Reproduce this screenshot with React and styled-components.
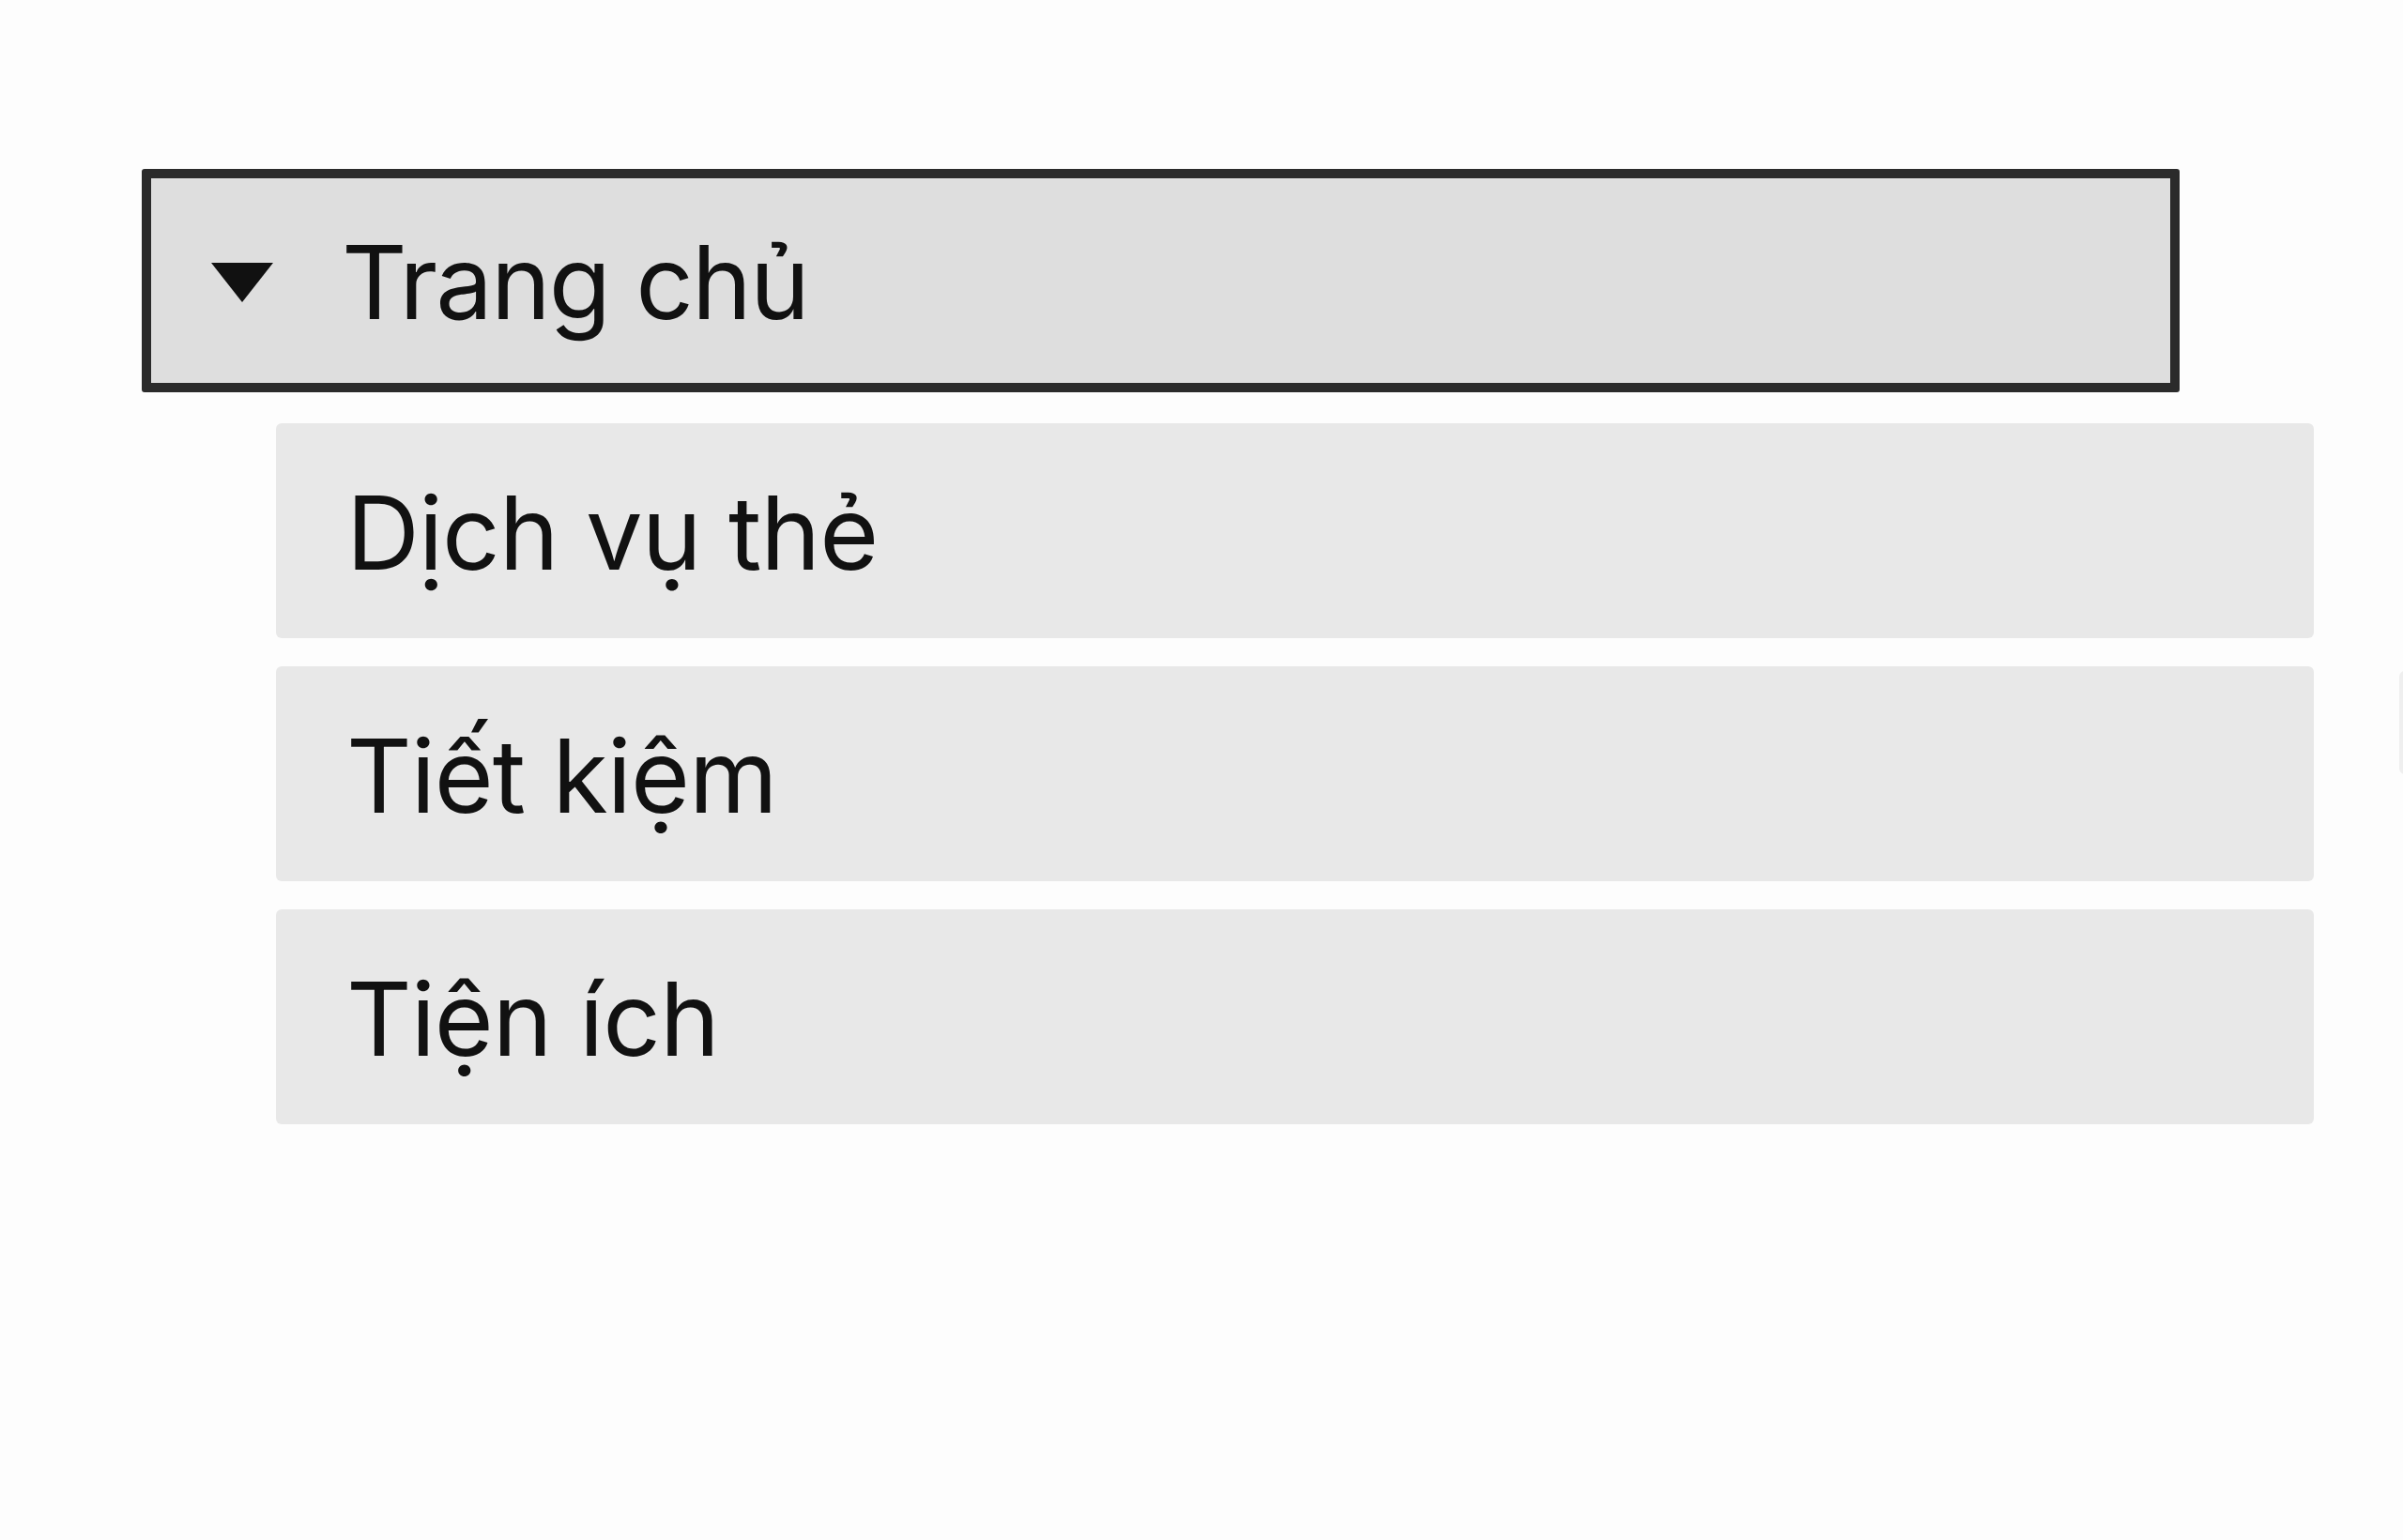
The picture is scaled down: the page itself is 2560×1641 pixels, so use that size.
import React from "react";
import styled, { createGlobalStyle } from "styled-components";

const Global = createGlobalStyle`
  html, body {
    margin: 0;
    padding: 0;
    background: #fdfdfd;
  }
  body {
    font-family: Inter, Lato, "Noto Sans", sans-serif;
    color: #151515;
  }
`;

const Page = styled.div`
  position: relative;
  min-height: 1641px;
  padding: 180px 0 0 151px;
  box-sizing: border-box;
  overflow: hidden;
`;

const Tree = styled.nav`
  display: flex;
  flex-direction: column;
  width: 2314px;
`;

const Header = styled.div`
  box-sizing: border-box;
  width: 2171px;
  height: 238px;
  border: 10px solid #2b2b2b;
  border-radius: 3px;
  background: #dedede;
  display: flex;
  align-items: center;
  padding-left: 64px;
  gap: 73px;
`;

const Caret = styled.svg`
  width: 66px;
  height: 42px;
  flex: none;
  margin-top: 4px;
`;

const Label = styled.span`
  font-size: 108px;
  line-height: 1;
  font-weight: 400;
  color: #111;
  letter-spacing: ${(p) => (p.$tight ? "-2px" : "-1px")};
  margin-top: 4px;
`;

const Children = styled.ul`
  list-style: none;
  margin: 33px 0 0 143px;
  padding: 0;
  display: flex;
  flex-direction: column;
  gap: 30px;
`;

const Item = styled.li`
  box-sizing: border-box;
  width: 2171px;
  height: 229px;
  background: #e8e8e8;
  border-radius: 6px;
  display: flex;
  align-items: center;
  padding-left: 75px;
`;

const EdgeTab = styled.div`
  position: absolute;
  left: 2556px;
  top: 715px;
  width: 20px;
  height: 110px;
  border-radius: 6px;
  background: #efefef;
`;

export default function App() {
  const items = ["Dịch vụ thẻ", "Tiết kiệm", "Tiện ích"];
  return (
    <>
      <Global />
      <Page>
        <Tree>
          <Header>
            <Caret viewBox="0 0 66 42">
              <polygon points="0,0 66,0 33,42" fill="#111" />
            </Caret>
            <Label $tight>Trang chủ</Label>
          </Header>
          <Children>
            {items.map((t) => (
              <Item key={t}>
                <Label>{t}</Label>
              </Item>
            ))}
          </Children>
        </Tree>
        <EdgeTab />
      </Page>
    </>
  );
}
